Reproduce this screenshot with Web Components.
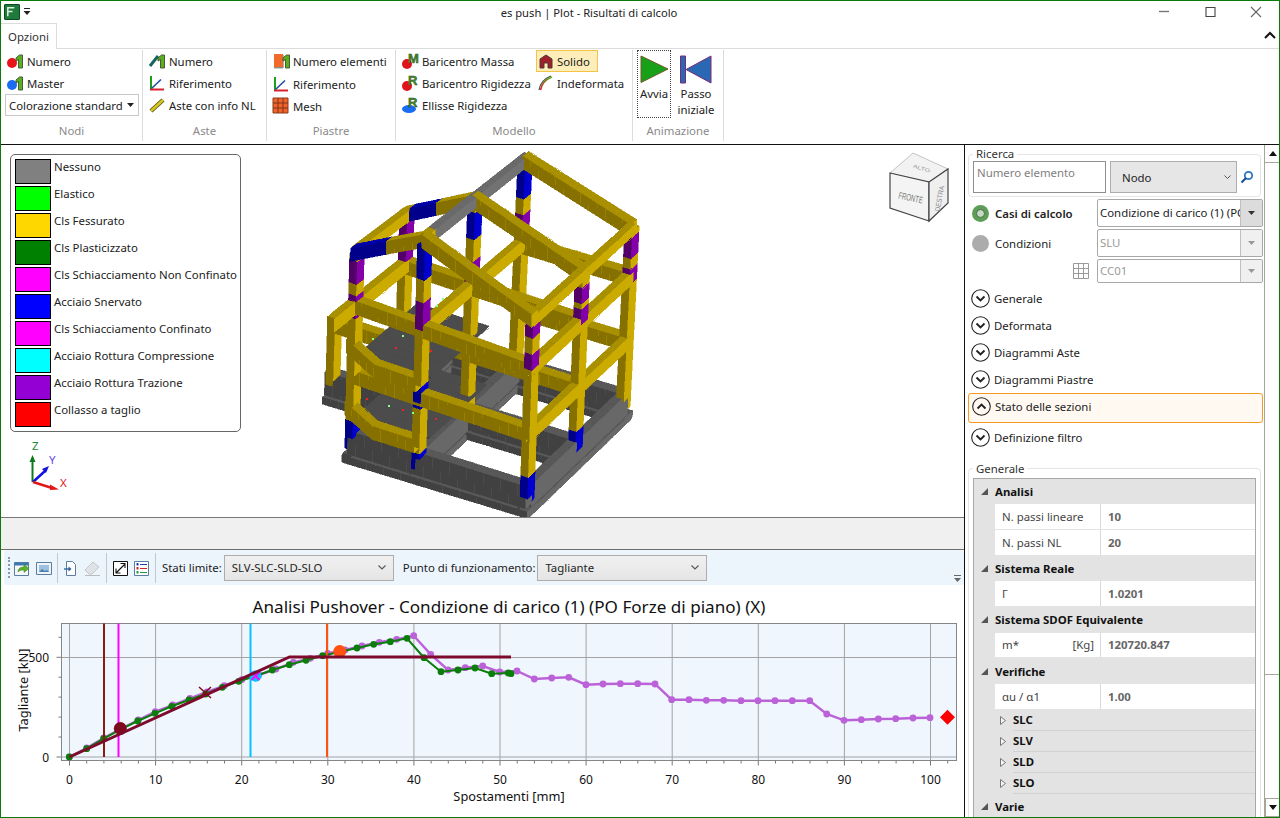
<!DOCTYPE html>
<html lang="it">
<head>
<meta charset="utf-8">
<title>es push | Plot - Risultati di calcolo</title>
<style>
  html, body { margin: 0; height: 100%; overflow: hidden; background: #fff; }
  body { font: 12px "Noto Sans", "Liberation Sans", sans-serif; color: #1c1c1c; }
</style>
</head>
<body>
<fem-window>
  <title-bar slot="title" heading="es push | Plot - Risultati di calcolo"></title-bar>
  <ribbon-bar slot="ribbon">
    <ribbon-group label="Nodi" width="142">
      <ribbon-item icon="nodeRed" text="Numero"></ribbon-item>
      <ribbon-item icon="nodeBlue" text="Master"></ribbon-item>
      <ribbon-combo text="Colorazione standard"></ribbon-combo>
    </ribbon-group>
    <ribbon-group label="Aste" width="124">
      <ribbon-item icon="beamNum" text="Numero"></ribbon-item>
      <ribbon-item icon="axes" text="Riferimento"></ribbon-item>
      <ribbon-item icon="beamNl" text="Aste con info NL"></ribbon-item>
    </ribbon-group>
    <ribbon-group label="Piastre" width="129">
      <ribbon-item icon="plateNum" text="Numero elementi"></ribbon-item>
      <ribbon-item icon="axes" text="Riferimento" style="margin-top:1px"></ribbon-item>
      <ribbon-item icon="mesh" text="Mesh"></ribbon-item>
    </ribbon-group>
    <ribbon-group label="Modello" width="237" cols="2">
      <ribbon-item icon="massM" text="Baricentro Massa"></ribbon-item>
      <ribbon-item icon="solid" text="Solido" selected></ribbon-item>
      <ribbon-item icon="massR" text="Baricentro Rigidezza"></ribbon-item>
      <ribbon-item icon="undeformed" text="Indeformata"></ribbon-item>
      <ribbon-item icon="ellipseR" text="Ellisse Rigidezza"></ribbon-item>
    </ribbon-group>
    <ribbon-group label="Animazione" width="91">
      <ribbon-big icon="play" text="Avvia" focused></ribbon-big>
      <ribbon-big icon="rewind" text="Passo iniziale"></ribbon-big>
    </ribbon-group>
  </ribbon-bar>

  <model-view slot="view">
    <state-legend></state-legend>
  </model-view>

  <chart-toolbar slot="toolbar"></chart-toolbar>
  <push-chart slot="chart"></push-chart>

  <side-panel slot="side">
    <search-box></search-box>
    <case-row text="Casi di calcolo" value="Condizione di carico (1) (PO Forze di piano) (X)" active></case-row>
    <case-row text="Condizioni" value="SLU"></case-row>
    <case-row value="CC01" grid></case-row>
    <expander-row text="Generale" style="margin-top:1.5px"></expander-row>
    <expander-row text="Deformata"></expander-row>
    <expander-row text="Diagrammi Aste"></expander-row>
    <expander-row text="Diagrammi Piastre"></expander-row>
    <expander-row text="Stato delle sezioni" open></expander-row>
    <expander-row text="Definizione filtro"></expander-row>
    <prop-box label="Generale">
      <prop-cat text="Analisi"></prop-cat>
      <prop-row text="N. passi lineare" value="10"></prop-row>
      <prop-row text="N. passi NL" value="20"></prop-row>
      <prop-cat text="Sistema Reale"></prop-cat>
      <prop-row text="Γ" value="1.0201"></prop-row>
      <prop-cat text="Sistema SDOF Equivalente"></prop-cat>
      <prop-row text="m*" unit="[Kg]" value="120720.847"></prop-row>
      <prop-cat text="Verifiche"></prop-cat>
      <prop-row text="αu / α1" value="1.00"></prop-row>
      <prop-sub text="SLC"></prop-sub>
      <prop-sub text="SLV"></prop-sub>
      <prop-sub text="SLD"></prop-sub>
      <prop-sub text="SLO"></prop-sub>
      <prop-cat text="Varie"></prop-cat>
    </prop-box>
  </side-panel>
</fem-window>

<script>
"use strict";

// little green "1" that several ribbon icons share
const one = (x = 9) => `<path d="M${x} 5l3.500-3h3v13H${x + 2.5}V6.500L${x} 8z" fill="#58b01c" stroke="#4a5a3a" stroke-width="1"/>`;
const letter = (c) => `<text x="6" y="10" font-family="Liberation Sans, sans-serif" font-weight="700" font-size="13" fill="#3f8f1f" stroke="#33502a" stroke-width=".5">${c}</text>`;

const ICONS = {
  nodeRed: `<circle cx="5" cy="10" r="5" fill="#e8141c"/>${one()}`,
  nodeBlue: `<circle cx="5" cy="10" r="5" fill="#1a6cf0"/>${one()}`,
  beamNum: `<path d="M1 13L9 3" stroke="#17655f" stroke-width="3"/>${one()}`,
  axes: `<path d="M2 1v13" stroke="#1aa01a" stroke-width="2"/><path d="M1 14.500h14" stroke="#d8232a" stroke-width="2"/><path d="M2.500 13.500L12 4.500" stroke="#1e4f9f" stroke-width="1.600"/>`,
  beamNl: `<path d="M2 14L14 3" stroke="#55551a" stroke-width="4.400"/><path d="M2 14L14 3" stroke="#d6c81e" stroke-width="2.600"/>`,
  plateNum: `<path d="M1 1h9v13H1z" fill="#f26a2a"/><path d="M1 14h9v1.400H1z" fill="#8b8b8b"/><path d="M10 2h1v13h-1z" fill="#b0b0b0"/>${one(10)}`,
  mesh: `<path d="M0 0h15v15H0z" fill="#f0622a" stroke="#8a3a18"/><path d="M5 0v15M10 0v15M0 5h15M0 10h15" stroke="#7c3216" stroke-width="1"/>`,
  massM: `<circle cx="5" cy="11" r="5" fill="#e0141c"/>${letter("M")}`,
  massR: `<circle cx="5" cy="11" r="5" fill="#e0141c"/>${letter("R")}`,
  ellipseR: `<ellipse cx="7" cy="12" rx="7" ry="4" fill="#1a6cf0"/>${letter("R")}`,
  solid: `<path d="M1 6l6-4 6 4v9H9v-5H5v5H1z" fill="#a01f28" stroke="#4a3a3a" stroke-width="1"/>`,
  undeformed: `<path d="M2 15C3 9 6 4 14 1" fill="none" stroke="#444" stroke-width="1.200"/><path d="M3.500 15C4.500 10 7 5 15 2" fill="none" stroke="url(#ud)" stroke-width="1.600"/><defs><linearGradient id="ud" x1="0" y1="1" x2="1" y2="0"><stop offset="0" stop-color="#e01818"/><stop offset="1" stop-color="#4ec41a"/></linearGradient></defs>`,
  play: `<svg width="29" height="29" viewBox="0 0 29 29"><path d="M1 1L28 14 1 27.500z" fill="#18a018" stroke="#73562a" stroke-width="1"/></svg>`,
  rewind: `<svg width="32" height="29" viewBox="0 0 32 29"><path d="M.5 1h5v27h-5z" fill="#2a68b4" stroke="#7a2a7a"/><path d="M31 1L6 14.500 31 28z" fill="#2a68b4" stroke="#7a2a7a"/></svg>`
};

class TitleBar extends HTMLElement {
  connectedCallback() {
    this.attachShadow({ mode: "open" }).innerHTML = `
      <style>
        :host { display: flex; align-items: center; height: 22px; position: relative; }
        .logo { width: 16px; height: 16px; margin: 0 0 0 3px; background: #1f7a3c; border: 1px solid #0c4a22; box-sizing: border-box; border-radius: 1px; }
        .qat { margin-left: 3px; }
        .title { position: absolute; left: 0; width: 1176px; text-align: center; font-size: 11.200px; color: #222; }
        .ctl { margin-left: auto; display: flex; }
        .ctl svg { display: block; width: 46px; height: 22px; }
      </style>
      <svg class="logo" viewBox="0 0 15 15"><path d="M3 12V3h7M3 7h5" fill="none" stroke="#dff2e0" stroke-width="1.600"/></svg>
      <svg class="qat" width="8" height="8" viewBox="0 0 8 8"><path d="M1 .5h6" stroke="#222"/><path d="M.5 3h7L4 7z" fill="#222"/></svg>
      <div class="title">${this.getAttribute("heading")}</div>
      <div class="ctl">
        <svg viewBox="0 0 46 22"><path d="M18 10.500h10" stroke="#777" stroke-width="1.400"/></svg>
        <svg viewBox="0 0 46 22"><path d="M19 6.500h9v9h-9z" fill="none" stroke="#444" stroke-width="1.100"/></svg>
        <svg viewBox="0 0 46 22"><path d="M18 6l10 10M28 6L18 16" stroke="#666" stroke-width="1.100"/></svg>
      </div>`;
  }
}

class RibbonBar extends HTMLElement {
  connectedCallback() {
    this.attachShadow({ mode: "open" }).innerHTML = `
      <style>
        :host { display: block; }
        .tabs { height: 26px; position: relative; display: flex; border-bottom: 1px solid #dcdcdc; box-sizing: border-box; }
        .tab { width: 56px; height: 26px; box-sizing: border-box; border: 1px solid #dcdcdc; border-left: 0; border-bottom: 0; background: #fff; text-align: center; line-height: 25px; font-size: 11.400px; color: #333; }
        .fold { position: absolute; right: 3px; top: 8px; }
        .groups { display: flex; height: 96px; box-sizing: border-box; padding-top: 1px; border-bottom: 1px solid #111; }
      </style>
      <div class="tabs"><div class="tab">Opzioni</div>
        <svg class="fold" width="12" height="8" viewBox="0 0 12 8"><path d="M1 7l5-5 5 5" fill="none" stroke="#111" stroke-width="2"/></svg></div>
      <div class="groups"><slot></slot></div>`;
  }
}

class RibbonGroup extends HTMLElement {
  connectedCallback() {
    const cols = this.getAttribute("cols");
    const isBig = this.getAttribute("label") === "Animazione";
    this.attachShadow({ mode: "open" }).innerHTML = `
      <style>
        :host { display: flex; flex-direction: column; height: 91px; box-sizing: border-box; border-right: 1px solid #dcdcdc; width: ${this.getAttribute("width")}px; flex: none; }
        .items { flex: 1; min-height: 0; padding: 0 0 0 5px; display: ${cols ? "grid" : "flex"};
          ${cols ? "grid-template-columns: 135px auto; grid-auto-rows: 22px; justify-content: start;" : isBig ? "gap: 8px; padding-left: 4px;" : "flex-direction: column;"} }
        .label { height: 18px; line-height: 16px; text-align: center; color: #8a8a8a; font-size: 11.400px; }
      </style>
      <div class="items"><slot></slot></div>
      <div class="label">${this.getAttribute("label")}</div>`;
  }
}

class RibbonItem extends HTMLElement {
  connectedCallback() {
    const sel = this.hasAttribute("selected");
    this.attachShadow({ mode: "open" }).innerHTML = `
      <style>
        :host { display: flex; align-items: center; height: 22px; box-sizing: border-box; white-space: nowrap; font-size: 11.350px; color: #222; padding-left: 1px; ${sel ? "background: #fdeeb9; border: 1px solid #f5c345; width: 62px; padding-left: 2px;" : ""} }
        svg { flex: none; width: 16px; height: 16px; margin-right: ${sel ? 2 : 4}px; overflow: visible; }
      </style>
      <svg viewBox="0 0 16 16">${ICONS[this.getAttribute("icon")]}</svg>
      <span>${this.getAttribute("text")}</span>`;
  }
}

class RibbonCombo extends HTMLElement {
  connectedCallback() {
    this.attachShadow({ mode: "open" }).innerHTML = `
      <style>
        :host { display: flex; align-items: center; justify-content: space-between; width: 134px; height: 22px; margin-left: -1px; box-sizing: border-box; border: 1px solid #c8c8c8; padding: 0 4px 0 3px; font-size: 11.350px; color: #222; white-space: nowrap; }
      </style>
      <span>${this.getAttribute("text")}</span>
      <svg width="7" height="4" viewBox="0 0 7 4"><path d="M0 0h7L3.500 4z" fill="#222"/></svg>`;
  }
}

class RibbonBig extends HTMLElement {
  connectedCallback() {
    const words = this.getAttribute("text").split(" ");
    this.attachShadow({ mode: "open" }).innerHTML = `
      <style>
        :host { display: flex; flex-direction: column; align-items: center; width: 34px; height: 68px; box-sizing: border-box; font-size: 11.350px; color: #222; line-height: 16px; ${this.hasAttribute("focused") ? "outline: 1px dotted #444; outline-offset: -1px;" : ""} }
        .ic { height: 36px; padding-top: 5px; box-sizing: border-box; flex: none; }
      </style>
      <div class="ic">${ICONS[this.getAttribute("icon")]}</div>
      ${words.map((w) => `<div>${w}</div>`).join("")}`;
  }
}

const LEGEND = [
  ["Nessuno", "#808080"], ["Elastico", "#00ff00"], ["Cls Fessurato", "#ffd700"],
  ["Cls Plasticizzato", "#008000"], ["Cls Schiacciamento Non Confinato", "#ff00ff"],
  ["Acciaio Snervato", "#0000ff"], ["Cls Schiacciamento Confinato", "#ff00ff"],
  ["Acciaio Rottura Compressione", "#00ffff"], ["Acciaio Rottura Trazione", "#9400d3"],
  ["Collasso a taglio", "#ff0000"]
];

class StateLegend extends HTMLElement {
  connectedCallback() {
    this.attachShadow({ mode: "open" }).innerHTML = `
      <style>
        :host { position: absolute; left: 9px; top: 9px; width: 231px; height: 278px; box-sizing: border-box; background: #fff; border: 1px solid #666; border-radius: 5px; padding: 4px 0 0 4px; display: block; }
        .row { display: flex; height: 27px; font-size: 11.400px; color: #222; white-space: nowrap; }
        .sw { width: 36px; height: 25px; box-sizing: border-box; border: 1px solid #000; margin-right: 3px; flex: none; }
        span { line-height: 16px; }
      </style>
      ${LEGEND.map(([t, c]) => `<div class="row"><div class="sw" style="background:${c}"></div><span>${t}</span></div>`).join("")}`;
  }
}

// base and eave corners of the frame as seen in the picture, in page pixels
const BASE = [[352, 446], [527, 500], [623, 408], [449, 355]];
const TOP = [[357, 252], [533, 318], [632, 228], [457, 176]];
const mix = (a, b, t) => a + (b - a) * t;
function bil(c, u, v, i) {
  return mix(mix(c[0][i], c[1][i], u), mix(c[3][i], c[2][i], u), v);
}
function proj(u, v, h) {
  return [mix(bil(BASE, u, v, 0), bil(TOP, u, v, 0), h), mix(bil(BASE, u, v, 1), bil(TOP, u, v, 1), h)];
}

const SHADES = {
  yellow: ["#a89000", "#857000", "#cbab00"],
  blue: ["#0000a8", "#00008a", "#0000d0"],
  purple: ["#6d0090", "#520068", "#8400a8"],
  gray: ["#585858", "#414141", "#686868"],
  ridge: ["#6a6a6a", "#505050", "#727272"],
  slab: ["#4c4c4c", "#3c3c3c", "#4c4c4c"]
};

function buildModel() {
  const faces = [];
  const box = (u0, u1, v0, v1, b0, t0, b1, t1, col) => {
    const s = SHADES[col];
    const cu = (u0 + u1) / 2, cv = (v0 + v1) / 2, ch = (b0 + t0 + b1 + t1) / 4;
    const key = cv * 1.0 - cu * 1.0 - ch * 1.0;
    const pts = [
      [[u0, v0, t0], [u1, v0, t1], [u1, v1, t1], [u0, v1, t0]],
      [[u0, v0, b0], [u1, v0, b1], [u1, v0, t1], [u0, v0, t0]],
      [[u1, v0, b1], [u1, v1, b1], [u1, v1, t1], [u1, v0, t1]]
    ];
    pts.forEach((f, i) => faces.push({ key, fill: s[i], i, pts: f.map((p) => proj(p[0], p[1], p[2])) }));
  };
  const HU = 0.022, HV = 0.035, BH = 0.034;
  const beamX = (u0, u1, v, h0, h1, col, hv = 0.03, hh = BH) => {
    const n = Math.max(1, Math.ceil(Math.abs(u1 - u0) / 0.05));
    for (let i = 0; i < n; i++) {
      const a = mix(u0, u1, i / n), b = mix(u0, u1, (i + 1) / n);
      const ha = mix(h0, h1, i / n), hb = mix(h0, h1, (i + 1) / n);
      const c = typeof col === "function" ? col((a + b) / 2) : col;
      box(a, b, v - hv, v + hv, ha - hh, ha + hh, hb - hh, hb + hh, c);
    }
  };
  const beamY = (v0, v1, u, h, col, hu = 0.02, hh = BH) => {
    const n = Math.max(1, Math.ceil(Math.abs(v1 - v0) / 0.07));
    for (let i = 0; i < n; i++) {
      const a = mix(v0, v1, i / n), b = mix(v0, v1, (i + 1) / n);
      const c = typeof col === "function" ? col((a + b) / 2) : col;
      box(u - hu, u + hu, a, b, h - hh, h + hh, h - hh, h + hh, c);
    }
  };
  // coloured stretches of a column are given as page y ranges
  const column = (u, v, top, segs) => {
    const y0 = proj(u, v, 0)[1], y1 = proj(u, v, 1)[1];
    const n = Math.ceil(top / 0.03);
    for (let i = 0; i < n; i++) {
      const a = top * i / n, b = top * (i + 1) / n;
      const y = mix(y0, y1, (a + b) / 2);
      const seg = segs.find((s) => y >= s[0] && y <= s[1]);
      box(u - HU, u + HU, v - HV, v + HV, a, b, a, b, seg ? seg[2] : "yellow");
    }
  };
  const slab = (u0, u1, v0, v1, h) => {
    const nu = 8, nv = 8;
    for (let i = 0; i < nu; i++) for (let j = 0; j < nv; j++) {
      box(mix(u0, u1, i / nu), mix(u0, u1, (i + 1) / nu), mix(v0, v1, j / nv), mix(v0, v1, (j + 1) / nv), h - 0.006, h, h - 0.006, h, "slab");
    }
  };

  // foundation grid
  [0, 0.5, 1].forEach((v) => {
    beamX(-0.03, 1.03, v, -0.05, -0.05, "gray", 0.05, 0.018);
    beamX(-0.01, 1.01, v, 0.03, 0.03, "gray", 0.03, 0.06);
  });
  [0, 0.38, 1].forEach((u) => {
    beamY(-0.03, 1.03, u, -0.05, "gray", 0.035, 0.018);
    beamY(0, 1, u, 0.03, "gray", 0.025, 0.06);
  });
  beamX(-0.38, 0, 0.43, -0.05, -0.05, "gray", 0.05, 0.018);
  beamX(-0.38, 0, 0.43, 0.03, 0.03, "gray", 0.03, 0.06);

  // floors in the left bay
  slab(0.01, 0.42, 0.03, 0.62, 0.47);
  slab(0.01, 0.42, 0.03, 0.62, 0.15);

  // beams per frame
  [0, 0.5, 1].forEach((v) => {
    beamX(v === 1 ? 0.38 : 0, 1, v, 0.73, 0.73, "yellow");
    beamX(v === 1 ? 0.38 : 0, 1, v, 0.37, 0.37, "yellow");
  });
  beamX(-0.35, 0, 0.43, 0.34, 0.34, "yellow");
  beamX(-0.02, 0.14, -0.02, 0.53, 0.45, "yellow");
  beamX(0.14, 0.38, -0.02, 0.45, 0.45, "yellow");
  beamX(-0.02, 0.14, -0.02, 0.21, 0.13, "yellow");
  beamX(0.14, 0.38, -0.02, 0.13, 0.13, "yellow");

  beamY(0, 1, 1, 0.73, "yellow");
  beamY(0, 1, 1, 0.37, "yellow");
  beamY(0, 1, 0.38, 0.73, "yellow");
  beamY(-0.25, 0.5, 0, 0.73, "yellow");
  beamY(0, 0.5, 0, 0.37, "yellow");
  beamY(-0.02, 1, 1, 1, "yellow", 0.02, 0.028);
  beamY(-0.02, 0.5, 0, 1, "yellow", 0.02, 0.028);
  beamY(0, 1.02, 0.38, 1.2, (v) => (v > 0.04 ? "ridge" : "yellow"), 0.02, 0.028);

  // rafters
  [0, 0.5].forEach((v) => beamX(-0.02, 0.38, v, 0.99, 1.2, v === 0 ? (u) => (u < 0.17 ? "blue" : "yellow") : (u) => (u > 0.02 && u < 0.17 ? "blue" : "yellow")));
  [0, 0.5, 1].forEach((v) => beamX(0.38, 1.01, v, 1.2, 1, "yellow"));

  // columns
  column(0, 0, 1, [[416, 460, "blue"], [258, 282, "purple"], [292, 316, "purple"]]);
  column(0.38, 0, 1.18, [[452, 480, "blue"], [385, 404, "blue"], [300, 335, "purple"], [240, 276, "blue"]]);
  column(1, 0, 1, [[475, 510, "blue"], [350, 366, "purple"], [318, 335, "purple"]]);
  column(0, 0.5, 1, [[415, 430, "blue"], [222, 268, "purple"]]);
  column(0.38, 0.5, 1.18, [[258, 288, "purple"], [210, 238, "blue"]]);
  column(1, 0.5, 1, [[430, 455, "blue"], [282, 298, "purple"], [305, 322, "purple"]]);
  column(0.38, 1, 1.18, [[213, 225, "purple"], [238, 248, "purple"], [165, 196, "blue"]]);
  column(1, 1, 1, [[235, 252, "purple"], [267, 280, "purple"]]);
  column(-0.35, 0.43, 0.36, []);

  faces.sort((a, b) => b.key - a.key || a.i - b.i);
  return faces.map((f) => {
    const p = f.pts.map((q) => q[0].toFixed(1) + "," + q[1].toFixed(1)).join(" ");
    return `<polygon points="${p}" fill="${f.fill}" stroke="${f.fill}" stroke-width=".5"/>`;
  }).join("");
}

class ModelView extends HTMLElement {
  connectedCallback() {
    const dots = [[372, 338, "#8f8"], [395, 347, "#e22"], [402, 335, "#8f8"], [430, 350, "#e22"], [388, 405, "#8f8"], [366, 398, "#e22"], [402, 409, "#e22"], [435, 418, "#e22"], [412, 412, "#8f8"], [436, 305, "#8f8"], [442, 298, "#8f8"]]
      .map(([x, y, c]) => `<rect x="${x}" y="${y}" width="1.500" height="1.500" fill="${c}"/>`).join("");
    this.attachShadow({ mode: "open" }).innerHTML = `
      <style>
        :host { display: block; position: relative; height: 373px; background: #fff; border-bottom: 1px solid #777; box-sizing: border-box; overflow: hidden; }
        svg { position: absolute; left: 0; top: 0; display: block; }
      </style>
      <svg width="963" height="373" viewBox="1 145 963 373" shape-rendering="crispEdges">
        ${buildModel()}${dots}
      </svg>
      <svg width="963" height="373" viewBox="1 145 963 373">
        <g>
          <path d="M913 153L948 169 929 182 890 173z" fill="#f2f2f2" stroke="#c4c4c4"/>
          <path d="M890 173L929 182 929 221 890 208z" fill="#f4f4f4" stroke="#444" stroke-width="1.200"/>
          <path d="M929 182L948 169 948 203 929 221z" fill="#efefef" stroke="#444" stroke-width="1.200"/>
          <text transform="translate(921 170) rotate(18) scale(1 .7)" font-family="Liberation Sans, sans-serif" font-size="7" fill="#999" text-anchor="middle">ALTO</text>
          <text transform="translate(910 201) rotate(12) scale(.75 1.200)" font-family="Liberation Sans, sans-serif" font-size="8" fill="#777" text-anchor="middle">FRONTE</text>
          <text transform="translate(942 199) rotate(-80) scale(.8 .9)" font-family="Liberation Sans, sans-serif" font-size="8" fill="#888" text-anchor="middle">DESTRA</text>
        </g>
        <g font-family="Noto Sans, sans-serif" font-size="11.500">
          <path d="M32.500 482V459" stroke="#0a7a1a" stroke-width="2"/><path d="M29.500 462l3-7 3 7z" fill="#0a7a1a"/>
          <path d="M33 482L45 471" stroke="#1010e0" stroke-width="2.400"/><path d="M42 469l7-3-3 7z" fill="#1010e0"/>
          <path d="M33 482L52 488" stroke="#e01818" stroke-width="2.400"/><path d="M50 484.500l9 5-9 .5z" fill="#e01818"/>
          <text x="32" y="450" fill="#1a8a3a">Z</text>
          <text x="49" y="464" fill="#6a4ae8">Y</text>
          <text x="60" y="487" fill="#e02020">X</text>
        </g>
      </svg>
      <slot></slot>`;
  }
}

const TB = {
  export: `<path d="M.5 2.500h14v13H.5z" fill="#f6f8fa" stroke="#5a7ea0"/><path d="M.5 2.500h14v3H.5z" fill="#3d78b0"/><path d="M4 12c0-4 3-5 6-5V4.500l5 4-5 4V10c-2 0-4 0-6 2z" fill="#5cb02a" stroke="#3a7a1a" stroke-width=".5"/>`,
  picture: `<path d="M.5 2.500h15v12H.5z" fill="#eef3f8" stroke="#5a7ea0"/><path d="M3 5h10v7H3z" fill="#9cc0e0"/><path d="M3 12l3-3 3 2 2-1 2 2z" fill="#4a7fb0"/>`,
  doc: `<path d="M3.500 1.500h6l3 3v11h-9z" fill="#fff" stroke="#5a7ea0"/><path d="M1 9h6" stroke="#2a5f9a" stroke-width="1.300"/><path d="M5.500 6.500L8.500 9l-3 2.500z" fill="#2a5f9a"/>`,
  eraser: `<path d="M1 10l8-8 6 5-7 7H5z" fill="#dfe3e8" stroke="#c4c8cc"/><path d="M1 15.500h15" stroke="#bbb"/>`,
  expand: `<path d="M.5 1.500h14v14H.5z" fill="#fff" stroke="#111"/><path d="M3.500 12.500l8-8M7.500 3.500h4.500v4.500M3 8.500v4.500h4.500" fill="none" stroke="#111" stroke-width="1.100"/>`,
  list: `<path d="M.5 1.500h14v14H.5z" fill="#fff" stroke="#5a7ea0"/><path d="M6 4.500h7" stroke="#1a3fb0"/><path d="M6 8.500h7" stroke="#d02020"/><path d="M6 12.500h7" stroke="#1a9a3a"/><path d="M2.500 3h2v2.500h-2z" fill="#1a3fb0"/><path d="M2.500 7h2v2.500h-2z" fill="#d02020"/><path d="M2.500 11h2v2.500h-2z" fill="#1a9a3a"/>`
};

class ChartToolbar extends HTMLElement {
  connectedCallback() {
    const ic = (n, ml = 5) => `<svg style="margin-left:${ml}px;flex:none" width="16" height="16" viewBox="0 0 16 16">${TB[n]}</svg>`;
    const select = (t, w) => `<div class="sel" style="width:${w}px"><span>${t}</span><svg width="8" height="5" viewBox="0 0 8 5"><path d="M.5.5l3.500 3.500L7.500.5" fill="none" stroke="#555" stroke-width="1.100"/></svg></div>`;
    this.attachShadow({ mode: "open" }).innerHTML = `
      <style>
        :host { display: flex; align-items: center; position: relative; height: 35px; background: #ecf4fc; border-radius: 3px; box-sizing: border-box; padding-left: 4px; font-size: 11.400px; color: #222; white-space: nowrap; margin-left: 3px; }
        .grip { width: 2px; height: 21px; border-left: 2px dotted #8d98a6; flex: none; }
        .sep { width: 1px; height: 30px; background: #c2c8cf; margin-left: 5px; flex: none; }
        .sel { height: 26px; box-sizing: border-box; background: linear-gradient(#f0f0f0, #e5e5e5); border: 1px solid #adadad; display: flex; align-items: center; justify-content: space-between; padding: 0 7px; flex: none; }
        .over { position: absolute; right: 3px; bottom: 3px; }
      </style>
      <div class="grip"></div>
      ${ic("export", 2)}${ic("picture", 6)}<div class="sep"></div>
      ${ic("doc", 5)}${ic("eraser", 5)}<div class="sep" style="margin-left:6px"></div>
      ${ic("expand", 6)}${ic("list", 5)}<div class="sep"></div>
      <span style="margin-left:6px;margin-right:2px">Stati limite:</span>${select("SLV-SLC-SLD-SLO", 170)}
      <span style="margin-left:9px;margin-right:2px">Punto di funzionamento:</span>${select("Tagliante", 170)}
      <svg class="over" width="7" height="7" viewBox="0 0 7 7"><path d="M0 .5h7" stroke="#666"/><path d="M0 3h7L3.500 7z" fill="#666"/></svg>`;
  }
}

// readings of the curves, x is page pixels times 3 and y is (page y - 545) * 3
const GREEN = [[208,636],[260,611],[311,581],[362,553],[413,528],[465,505],[515,484],[567,465],[617,447],[667,427],[716,409],[767,393],[817,375],[868,359],[918,346],[968,332],[1020,320],[1071,309],[1121,298],[1171,290],[1221,280],[1272,338],[1323,380],[1374,375],[1425,369],[1475,386],[1525,384],[1533,386]];
const PURPLE = [[208,636],[260,609],[311,579],[363,551],[415,525],[466,500],[518,480],[570,460],[621,441],[673,422],[725,404],[776,390],[828,372],[880,352],[931,340],[983,325],[1035,315],[1086,303],[1138,292],[1190,283],[1241,272],[1292,328],[1344,375],[1396,368],[1448,363],[1499,381],[1551,378],[1603,402],[1655,399],[1706,397],[1758,419],[1809,417],[1861,416],[1913,416],[1965,417],[2015,464],[2067,464],[2119,466],[2171,466],[2223,467],[2274,467],[2325,467],[2377,467],[2429,467],[2480,507],[2532,526],[2584,524],[2635,522],[2687,521],[2739,519],[2790,518]];
const px = (p) => [(p[0] / 3).toFixed(1), (p[1] / 3 + 545).toFixed(1)];

class PushChart extends HTMLElement {
  connectedCallback() {
    const X0 = 69.5, SX = 8.61, L = 61.5, R = 956.5, T = 623.5, B = 760.5;
    let grid = "", ticks = "", labels = "";
    for (let i = 0; i <= 51; i++) {
      const x = X0 + i * 2 * SX;
      const major = i % 5 === 0;
      if (major) {
        grid += `<path d="M${x.toFixed(1)} ${T}V${B}"/>`;
        labels += `<text x="${x.toFixed(1)}" y="784" text-anchor="middle">${i * 2}</text>`;
      }
      ticks += `<path d="M${x.toFixed(1)} ${B}v${major ? 5 : 3}"/>`;
    }
    for (let i = 0; i <= 6; i++) {
      const y = 757 - i * 19.95;
      ticks += `<path d="M${L} ${y.toFixed(1)}h${i % 5 === 0 ? -5 : -3}"/>`;
    }
    const line = (pts) => pts.map(px).map((p) => p.join(",")).join(" ");
    const dots = (pts, c) => pts.map(px).map((p) => `<circle cx="${p[0]}" cy="${p[1]}" r="3.400" fill="${c}"/>`).join("");
    const vline = (x, c) => `<path d="M${x} ${T}V757" stroke="${c}" stroke-width="2"/>`;
    this.attachShadow({ mode: "open" }).innerHTML = `
      <style>
        :host { display: block; height: 232px; background: #fff; }
        svg { display: block; }
        text { font-family: "Noto Sans", "Liberation Sans", sans-serif; fill: #111; }
      </style>
      <svg width="963" height="232" viewBox="1 585 963 232">
        <text x="509" y="613" text-anchor="middle" font-size="17.100">Analisi Pushover - Condizione di carico (1) (PO Forze di piano) (X)</text>
        <rect x="${L}" y="${T}" width="${R - L}" height="${B - T}" fill="#eff6fe"/>
        <g stroke="#a3a3a3" stroke-width="1" fill="none">${grid}
          <path d="M${L} 657.500H${R}M${L} 757H${R}"/></g>
        <g stroke="#777" stroke-width="1">${ticks}</g>
        <rect x="${L}" y="${T}" width="${R - L}" height="${B - T}" fill="none" stroke="#868686"/>
        <polyline points="${line(PURPLE)}" fill="none" stroke="#bb62d8" stroke-width="2.400"/>${dots(PURPLE, "#bb62d8")}
        <path d="M947.500 709.800l7.500 7.500-7.500 7.500-7.500-7.500z" fill="#ff0000"/>
        <polyline points="${line(GREEN)}" fill="none" stroke="#0b7d0b" stroke-width="2"/>${dots(GREEN, "#0b7d0b")}
        ${vline(104, "#8b1a10")}${vline(118.500, "#ff00ff")}${vline(250.500, "#00c4ff")}${vline(327, "#ff5210")}
        <circle cx="120.300" cy="728.500" r="6.500" fill="#7e0a1e"/>
        <circle cx="255.700" cy="676" r="5.800" fill="#00c4ff"/>
        <path d="M251.500 672l8 8M259.500 672l-8 8" stroke="#ff00ff" stroke-width="1.800"/>
        <circle cx="339.700" cy="651.500" r="6.500" fill="#ff5210"/>
        <polyline points="69.500,757 289.500,657 511,657" fill="none" stroke="#7e0a2c" stroke-width="3"/>
        <path d="M199 687l12 11M211 687l-12 11" stroke="#7e0a1e" stroke-width="1.500"/>
        <text font-size="12" x="49" y="761.500" text-anchor="end">0</text>
        <text font-size="12" x="49" y="661.500" text-anchor="end">500</text>
        <g font-size="12">${labels}</g>
        <text font-size="12.800" x="509" y="800.500" text-anchor="middle">Spostamenti [mm]</text>
        <text font-size="12.800" transform="translate(28 690) rotate(-90)" text-anchor="middle">Tagliante [kN]</text>
      </svg>`;
  }
}

class SidePanel extends HTMLElement {
  connectedCallback() {
    this.attachShadow({ mode: "open" }).innerHTML = `
      <style>
        :host { display: flex; width: 315px; flex: none; background: #fff; border-left: 1px solid #111; box-sizing: content-box; height: 672px; overflow: hidden; }
        .body { width: 299px; padding: 0 1px 0 3px; box-sizing: border-box; flex: none; overflow: hidden; }
        .bar { width: 16px; flex: none; border-left: 1px solid #a8a498; box-sizing: border-box; position: relative; }
        .up, .down { height: 17px; border-bottom: 1px solid #a8a498; display: flex; align-items: center; justify-content: center; }
        .down { border: 1px solid #a8a498; position: absolute; bottom: 0; left: 0; right: 0; }
        .track { height: 511px; border-bottom: 1px solid #a8a498; }
      </style>
      <div class="body"><slot></slot></div>
      <div class="bar">
        <div class="up"><svg width="8" height="5" viewBox="0 0 8 5"><path d="M0 5h8L4 0z" fill="#111"/></svg></div>
        <div class="track"></div>
        <div class="down"><svg width="8" height="5" viewBox="0 0 8 5"><path d="M0 0h8L4 5z" fill="#111"/></svg></div>
      </div>`;
  }
}

class SearchBox extends HTMLElement {
  connectedCallback() {
    this.attachShadow({ mode: "open" }).innerHTML = `
      <style>
        :host { display: block; margin-top: 2px; }
        fieldset { margin: 0; width: 293px; box-sizing: border-box; border: 1px solid #e2e6ea; border-radius: 4px; padding: 0 4px; height: 50px; }
        legend { padding: 0 3px; margin-left: 0; font-size: 11.400px; line-height: 14px; color: #333; }
        .row { display: flex; align-items: center; }
        .in { width: 133px; height: 32px; box-sizing: border-box; border: 1px solid #8f8f8f; padding: 3px 3px; color: #808080; font-size: 11.400px; }
        .sel { margin-left: 4px; width: 127px; height: 32px; box-sizing: border-box; border: 1px solid #adadad; background: #e6e6e6; padding: 0 5px 0 11px; display: flex; align-items: center; justify-content: space-between; font-size: 11.400px; color: #222; }
        .lens { margin-left: 3px; }
      </style>
      <fieldset><legend>Ricerca</legend>
        <div class="row">
          <div class="in">Numero elemento</div>
          <div class="sel"><span>Nodo</span><svg width="7" height="5" viewBox="0 0 7 5"><path d="M.5.5l3 3 3-3" fill="none" stroke="#555"/></svg></div>
          <svg class="lens" width="14" height="14" viewBox="0 0 14 14"><circle cx="8.500" cy="5.500" r="3.700" fill="none" stroke="#2b74c4" stroke-width="1.800"/><path d="M6 8l-4.500 4.500" stroke="#1d4f92" stroke-width="2.200"/></svg>
        </div>
      </fieldset>`;
  }
}

class CaseRow extends HTMLElement {
  connectedCallback() {
    const active = this.hasAttribute("active");
    const hasText = this.hasAttribute("text");
    const grid = this.hasAttribute("grid");
    const h = grid ? 24 : 28;
    let lead = "";
    if (hasText) {
      lead = `<svg width="17" height="17" viewBox="0 0 17 17">${active ? '<circle cx="8.500" cy="8.500" r="8.500" fill="#5d9d58"/><circle cx="8.500" cy="8.500" r="4" fill="#c8d8c8" stroke="#3e6e3a"/>' : '<circle cx="8.500" cy="8.500" r="8.500" fill="#acacac"/>'}</svg><span class="t">${this.getAttribute("text")}</span>`;
    }
    const gridIcon = grid ? `<svg class="gi" width="16" height="16" viewBox="0 0 16 16"><path d="M.5.5h15v15H.5zM5.500.5v15M10.500.5v15M.5 5.500h15M.5 10.500h15" fill="none" stroke="#9a9a9a"/></svg>` : "";
    this.attachShadow({ mode: "open" }).innerHTML = `
      <style>
        :host { display: flex; align-items: center; height: ${h}px; margin-top: 2px; padding-left: 4px; font-size: 11.400px; position: relative; }
        .t { margin-left: 6px; color: #222; ${active ? "font-weight: 600;" : ""} }
        .gi { margin-left: auto; margin-right: 8px; }
        .combo { ${grid ? "" : "margin-left: auto;"} width: 166px; height: ${h}px; box-sizing: border-box; border: 1px solid #a8a8a8; border-radius: 2px; display: flex; overflow: hidden; flex: none; }
        .val { flex: 1; min-width: 0; overflow: hidden; white-space: nowrap; padding: ${grid ? 3 : 5}px 0 0 2px; color: ${active ? "#222" : "#999"}; font-size: 11.400px; }
        .btn { width: 21px; flex: none; background: ${active ? "#dcdcdc" : "#f0f0f0"}; border-left: 1px solid #c0c0c0; display: flex; align-items: center; justify-content: center; }
      </style>
      ${lead}${gridIcon}
      <div class="combo"><div class="val">${this.getAttribute("value")}</div>
        <div class="btn"><svg width="7" height="4" viewBox="0 0 7 4"><path d="M0 0h7L3.500 4z" fill="${active ? "#333" : "#999"}"/></svg></div></div>`;
  }
}

class ExpanderRow extends HTMLElement {
  connectedCallback() {
    const open = this.hasAttribute("open");
    this.attachShadow({ mode: "open" }).innerHTML = `
      <style>
        :host { display: flex; align-items: center; height: ${open ? 30 : 27}px; box-sizing: border-box; padding-left: 3px; font-size: 11.400px; color: #222;
          ${open ? "background: #fff9f2; border: 1px solid #f49a22; border-radius: 3px; margin: 0 0 1px 0; padding-bottom: 2px;" : ""} }
        svg { margin-right: 4px; flex: none; }
      </style>
      <svg width="19" height="19" viewBox="0 0 19 19"><circle cx="9.500" cy="9.500" r="8.800" fill="none" stroke="#222" stroke-width="1.100"/>
        <path d="${open ? "M5.500 11.500l4-4 4 4" : "M5.500 7.500l4 4 4-4"}" fill="none" stroke="#222" stroke-width="1.900"/></svg>
      <span>${this.getAttribute("text")}</span>`;
  }
}

class PropBox extends HTMLElement {
  connectedCallback() {
    this.attachShadow({ mode: "open" }).innerHTML = `
      <style>
        :host { display: block; margin-top: 11px; }
        fieldset { margin: 0; width: 293px; box-sizing: border-box; border: 1px solid #e2e6ea; border-radius: 4px; padding: 2px 4px 0; height: 400px; }
        legend { padding: 0 3px; margin-left: 0; font-size: 11.400px; line-height: 14px; color: #333; }
        .grid { border: 1px solid #a8a8a8; border-bottom: 0; background: #e3e3e3; width: 283px; box-sizing: border-box; }
      </style>
      <fieldset><legend>${this.getAttribute("label")}</legend>
        <div class="grid"><slot></slot></div>
      </fieldset>`;
  }
}

class PropCat extends HTMLElement {
  connectedCallback() {
    this.attachShadow({ mode: "open" }).innerHTML = `
      <style>
        :host { display: flex; align-items: center; height: 25.700px; font-size: 11.400px; font-weight: 700; color: #111; padding-left: 7px; box-sizing: border-box; }
        svg { margin-right: 7px; }
      </style>
      <svg width="7" height="7" viewBox="0 0 7 7"><path d="M7 0v7H0z" fill="#555"/></svg><span>${this.getAttribute("text")}</span>`;
  }
}

class PropRow extends HTMLElement {
  connectedCallback() {
    const unit = this.getAttribute("unit");
    this.attachShadow({ mode: "open" }).innerHTML = `
      <style>
        :host { display: flex; height: 25.700px; margin-left: 21px; background: #fff; font-size: 11.400px; box-sizing: border-box; border-bottom: 1px solid #e3e3e3; }
        .k { width: 106px; box-sizing: border-box; padding: 0 6px 0 7px; display: flex; justify-content: space-between; align-items: center; border-right: 1px solid #d9d9d9; color: #444; flex: none; white-space: nowrap; }
        .v { padding-left: 7px; display: flex; align-items: center; font-weight: 700; color: #666; }
      </style>
      <div class="k"><span>${this.getAttribute("text")}</span>${unit ? `<span>${unit}</span>` : ""}</div>
      <div class="v">${this.getAttribute("value")}</div>`;
  }
}

class PropSub extends HTMLElement {
  connectedCallback() {
    this.attachShadow({ mode: "open" }).innerHTML = `
      <style>
        :host { display: flex; align-items: center; height: 21px; font-size: 11.400px; font-weight: 700; color: #111; padding-left: 26px; box-sizing: border-box; }
        svg { margin-right: 7px; flex: none; }
        span { flex: 1; line-height: 20px; border-bottom: 1px solid #d2d2d2; }
      </style>
      <svg width="6" height="9" viewBox="0 0 6 9"><path d="M.5.5l5 4-5 4z" fill="#f4f4f4" stroke="#777"/></svg><span>${this.getAttribute("text")}</span>`;
  }
}

class FemWindow extends HTMLElement {
  connectedCallback() {
    this.attachShadow({ mode: "open" }).innerHTML = `
      <style>
        :host { display: flex; flex-direction: column; width: 1280px; height: 818px; box-sizing: border-box; border: 1px solid #0a7a0a; background: #fff; overflow: hidden; }
        .main { flex: 1; display: flex; min-height: 0; }
        .left { width: 963px; flex: none; display: flex; flex-direction: column; }
        .split { height: 32px; background: #f0f0f0; border-bottom: 1px solid #6e6e6e; box-sizing: border-box; flex: none; }
      </style>
      <slot name="title"></slot>
      <slot name="ribbon"></slot>
      <div class="main">
        <div class="left">
          <slot name="view"></slot>
          <div class="split"></div>
          <slot name="toolbar"></slot>
          <slot name="chart"></slot>
        </div>
        <slot name="side"></slot>
      </div>`;
  }
}

customElements.define("fem-window", FemWindow);
customElements.define("title-bar", TitleBar);
customElements.define("ribbon-bar", RibbonBar);
customElements.define("ribbon-group", RibbonGroup);
customElements.define("ribbon-item", RibbonItem);
customElements.define("ribbon-combo", RibbonCombo);
customElements.define("ribbon-big", RibbonBig);
customElements.define("state-legend", StateLegend);
customElements.define("model-view", ModelView);
customElements.define("chart-toolbar", ChartToolbar);
customElements.define("push-chart", PushChart);
customElements.define("side-panel", SidePanel);
customElements.define("search-box", SearchBox);
customElements.define("case-row", CaseRow);
customElements.define("expander-row", ExpanderRow);
customElements.define("prop-box", PropBox);
customElements.define("prop-cat", PropCat);
customElements.define("prop-row", PropRow);
customElements.define("prop-sub", PropSub);
</script>
</body>
</html>
